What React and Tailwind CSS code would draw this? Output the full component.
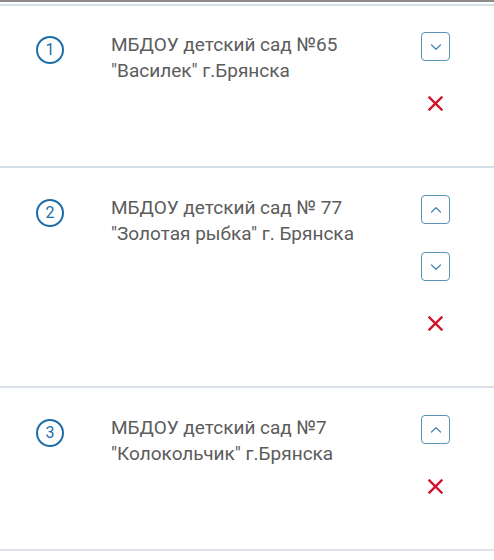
import React from "react";

const items = [
  { n: 1, l1: "МБДОУ детский сад №65", l2: "\"Василек\" г.Брянска", up: false, down: true },
  { n: 2, l1: "МБДОУ детский сад № 77", l2: "\"Золотая рыбка\" г. Брянска", up: true, down: true },
  { n: 3, l1: "МБДОУ детский сад №7", l2: "\"Колокольчик\" г.Брянска", up: true, down: false },
];

function Chevron({ dir }) {
  return (
    <div className="w-[29px] h-[29px] shrink-0 rounded-[4px] border-[1.5px] border-[#5a92b6] flex items-center justify-center">
      <svg width="12" height="8" viewBox="0 0 12 8" fill="none">
        {dir === "down" ? (
          <path d="M1.5 2L6 6.2L10.5 2" stroke="#4a88b0" strokeWidth="1.3" strokeLinecap="round" strokeLinejoin="round" />
        ) : (
          <path d="M1.5 6L6 1.8L10.5 6" stroke="#4a88b0" strokeWidth="1.3" strokeLinecap="round" strokeLinejoin="round" />
        )}
      </svg>
    </div>
  );
}

function Cross() {
  return (
    <div className="w-[28px] h-[28px] shrink-0 flex items-center justify-center">
      <svg width="15" height="15" viewBox="0 0 15 15" fill="none">
        <path d="M1.5 1.5L13.5 13.5M13.5 1.5L1.5 13.5" stroke="#d3122a" strokeWidth="2.4" strokeLinecap="square" />
      </svg>
    </div>
  );
}

export default function App() {
  return (
    <div className="w-[494px] h-[560px] bg-white overflow-hidden" style={{ fontFamily: "Roboto, 'Noto Sans', sans-serif" }}>
      <div className="h-[2px] bg-[#8c8c8c]" />
      <div className="h-[2px]" />
      <div className="h-[2px] bg-[#d4e0e7]" />
      {items.map((it, i) => (
        <div
          key={it.n}
          className={`flex border-b-2 ${i === 2 ? "border-[#dde2ea]" : i === 1 ? "border-[#d8e0ea]" : "border-[#d4e0e7]"} ${i === 0 ? "pt-[26px]" : "pt-[27px]"} pb-[49px]`}
        >
          <div className="w-[111px] shrink-0 pl-[36px] pt-[4px]">
            <div className="w-[28px] h-[28px] rounded-full border-2 border-[#1d6ea8] flex items-center justify-center text-[16px] text-[#1d6ea8] leading-none">
              {it.n}
            </div>
          </div>
          <div className="flex-1 min-w-0 text-[19px] leading-[26px] text-[#5c5c5c]">
            <div>{it.l1}</div>
            <div>{it.l2}</div>
          </div>
          <div className="w-[73px] shrink-0 flex flex-col items-center gap-[28px] pr-[44px]">
            {it.up && <Chevron dir="up" />}
            {it.down && <Chevron dir="down" />}
            <Cross />
          </div>
        </div>
      ))}
    </div>
  );
}
